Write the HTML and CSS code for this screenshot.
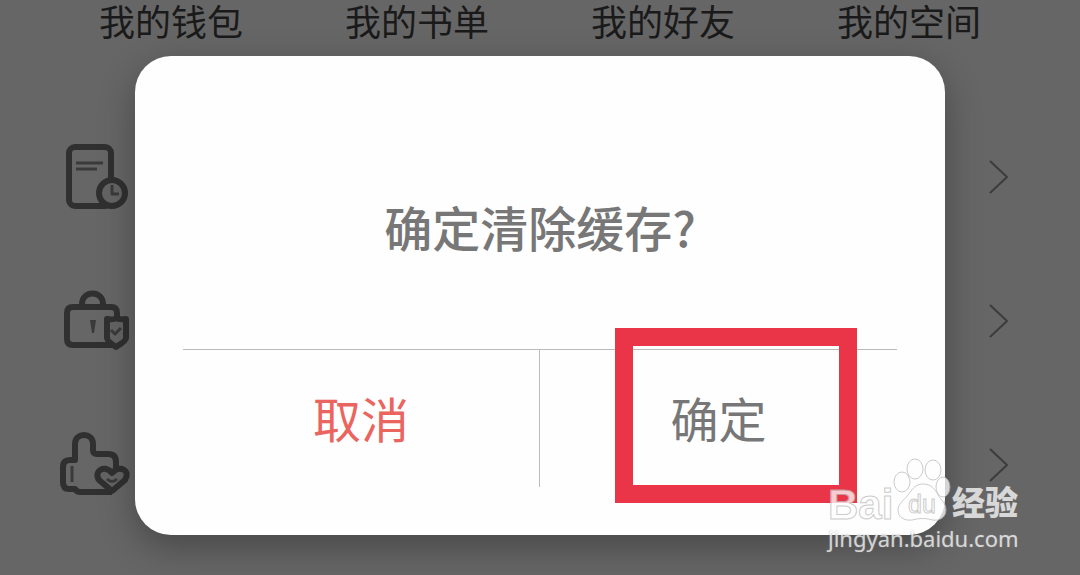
FILE: index.html
```html
<!DOCTYPE html>
<html lang="zh-CN">
<head>
  <meta charset="UTF-8" />
  <meta name="viewport" content="width=device-width, initial-scale=1.0"/>
  <title>清除缓存</title>
  <link rel="stylesheet" href="styles.css">
</head>
<body>
  <main class="screen">
    <nav class="tabs">
      <a href="#">我的钱包</a>
      <a href="#">我的书单</a>
      <a href="#">我的好友</a>
      <a href="#">我的空间</a>
    </nav>

    <ul class="list">
      <li class="row">
        <svg class="icon" width="72" height="72" viewBox="0 0 72 72">
          <rect x="9" y="6" width="42" height="59" rx="6"/>
          <path class="thin" d="M16 22h27M16 28h21"/>
          <circle class="cover" cx="52" cy="52" r="13"/>
          <path class="thin" d="M52 44v9h7"/>
        </svg>
        <svg class="arrow" width="24" height="40" viewBox="0 0 24 40"><path d="M2 4l17 16L2 36"/></svg>
      </li>
      <li class="row">
        <svg class="icon" width="72" height="72" viewBox="0 0 72 72">
          <path d="M22 21v-2c0-14 21-14 21 0v2"/>
          <path d="M53 60H13q-6 0-6-6V28q0-6 6-6h38q6 0 6 6v6"/>
          <path class="mark" d="M30 35h6l-2 13h-2z"/>
          <path class="cover" d="M47 34q7 1 9-1 3 2 10 1v19q0 3-10 9-9-6-9-9z"/>
          <path class="thin" d="M51 45l4 4 6-6"/>
        </svg>
        <svg class="arrow" width="24" height="40" viewBox="0 0 24 40"><path d="M2 4l17 16L2 36"/></svg>
      </li>
      <li class="row">
        <svg class="icon" width="72" height="72" viewBox="0 0 72 72">
          <path d="M52 63H20q-3 0-5-3H9q-6 0-6-7V38q0-7 7-7h5V15c0-12 18-12 18 0v6q0 4 4 4h11q8 0 8 8v9"/>
          <path class="thin" d="M12 37v16"/>
          <path class="cover" d="M52 62L39 51c-6-9 6-16 13-7 8-9 19-2 13 7z"/>
          <path class="thin" d="M47 50q5 5 10 0"/>
        </svg>
        <svg class="arrow" width="24" height="40" viewBox="0 0 24 40"><path d="M2 4l17 16L2 36"/></svg>
      </li>
    </ul>
  </main>

  <div class="overlay">
    <div class="dialog" role="dialog" aria-labelledby="question">
      <h1 class="question" id="question">确定清除缓存?</h1>
      <div class="actions">
        <button class="cancel" type="button">取消</button>
        <button class="confirm" type="button">确定</button>
      </div>
    </div>
  </div>

  <div class="watermark">
    <svg class="brand" width="196" height="64" viewBox="0 0 196 64">
      <text class="bai" x="0" y="61">Bai</text>
      <ellipse cx="74" cy="24" rx="8" ry="10"/>
      <ellipse cx="87" cy="11" rx="8" ry="10"/>
      <ellipse cx="105" cy="12" rx="8" ry="10"/>
      <ellipse cx="115" cy="29" rx="7" ry="10"/>
      <path d="M95 26c8 0 12 5 15 11 3 5 8 8 8 15 0 8-7 11-13 10-8-2-13-2-21 0-8 1-14-3-14-10 0-6 6-10 10-15s7-11 15-11z"/>
      <text class="du" x="80" y="55">du</text>
      <text class="jingyan" x="124" y="57">经验</text>
    </svg>
    <span class="site">jingyan.baidu.com</span>
  </div>
</body>
</html>
```

FILE: styles.css
```css
body {
  font-family: "Liberation Sans", "Noto Sans CJK SC", sans-serif;
  background: #666;
  margin: 0;
}
.screen {
  padding: 0 48px;
}
.tabs {
  display: grid;
  grid-template-columns: repeat(4, 1fr);
  height: 105px;
}
.tabs a {
  color: #1a1a1a;
  font-size: 36px;
  font-family: "Noto Sans CJK SC", sans-serif;
  font-weight: 400;
  line-height: 40px;
  text-align: center;
  text-decoration: none;
}
.list {
  list-style: none;
  margin: 0;
  padding: 0 20px 0 12px;
}
.row {
  display: flex;
  justify-content: space-between;
  align-items: center;
  height: 144px;
}
.icon, .arrow {
  fill: none;
  stroke: #303030;
  stroke-width: 6;
  stroke-linejoin: round;
  overflow: visible;
}
.icon .thin {
  stroke: #3a3a3a;
  stroke-width: 3;
}
.icon .mark {
  fill: #3a3a3a;
  stroke: none;
}
.icon .cover {
  fill: #646464;
}
.arrow {
  stroke: #3c3c3c;
  stroke-width: 2;
}

.overlay {
  position: absolute;
  inset: 0;
  padding-top: 56px;
  overflow: hidden;
}
.dialog {
  width: 75%;
  margin: 0 auto;
  padding: 0 48px 48px;
  box-sizing: border-box;
  background: #fefefe;
  border-radius: 36px;
  box-shadow: 0 12px 36px rgba(0,0,0,0.3);
}
.question {
  margin: 0;
  padding: 134px 0 87px;
  color: #777;
  font-family: "Noto Sans CJK SC", sans-serif;
  font-size: 48px;
  font-weight: 500;
  line-height: 72px;
  text-align: center;
}
.actions {
  display: grid;
  grid-template-columns: 1fr 1fr;
  border-top: 1px solid #bbb;
}
.actions button {
  position: relative;
  height: 137px;
  padding: 0 0 4px;
  border: 0;
  background: none;
  font-family: "Noto Sans CJK SC", sans-serif;
  font-size: 48px;
  cursor: pointer;
}
.actions .cancel {
  border-right: 1px solid #bbb;
  color: #ea6460;
}
.actions .confirm {
  color: #777;
}
/* red frame around the confirm button */
.confirm::after {
  content: "";
  position: absolute;
  inset: -22px 40px -16px 75px;
  border: 18px solid #e93547;
}

.watermark {
  position: absolute;
  right: 56px;
  bottom: 21px;
  width: 196px;
  opacity: 0.75;
}
.brand {
  display: block;
  fill: #fff;
  stroke: #bbb;
  stroke-width: 1;
}
.brand text {
  font-weight: 700;
}
.bai {
  font-size: 42px;
}
.brand .du {
  font-size: 25px;
  font-weight: 400;
}
.brand .jingyan {
  font-family: "Noto Sans CJK SC", sans-serif;
  font-size: 33px;
  font-weight: 900;
  stroke: none;
}
.site {
  display: block;
  color: #fff;
  font-family: "Noto Sans", sans-serif;
  font-size: 22px;
  line-height: 32px;
  text-shadow: 0 0 2px #888;
}
```
